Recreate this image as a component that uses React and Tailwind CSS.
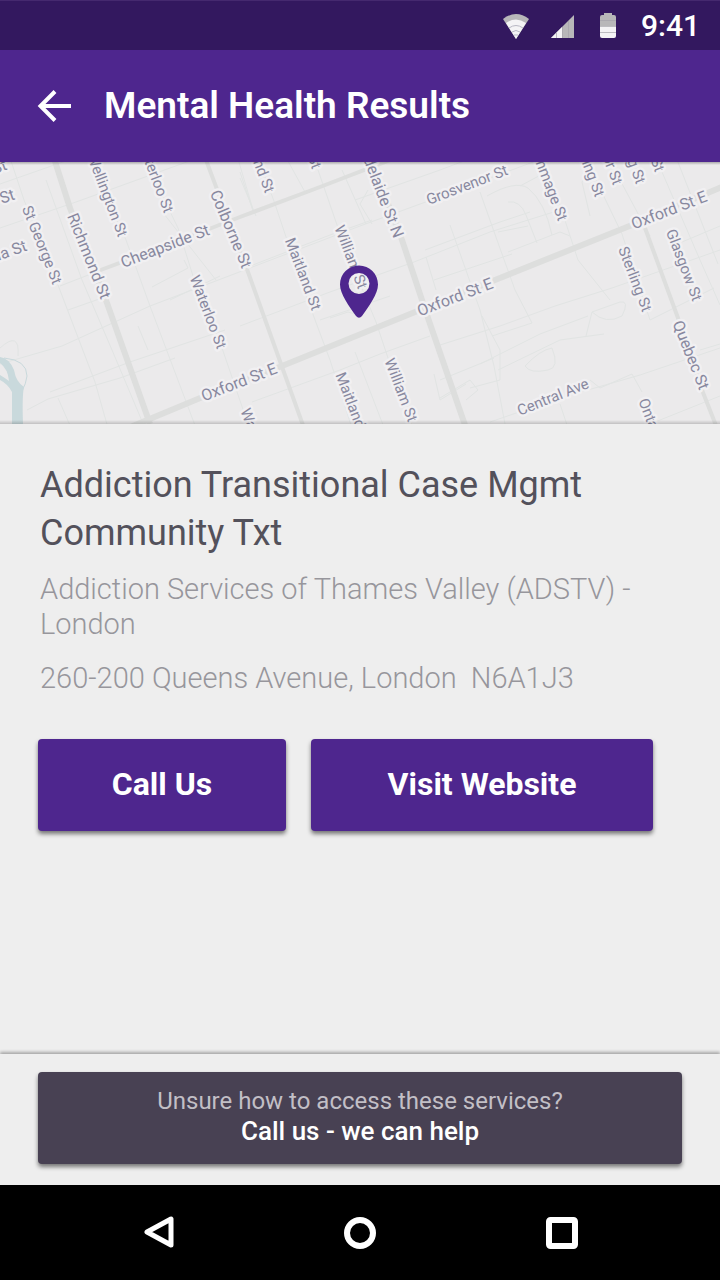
const mainRoads = [
  { d: "M52 152L70 208L107 303L150 424", w: 6 },
  { d: "M128 428L205 396L282 366L420 310L490 282L632 225L724 186", w: 6 },
  { d: "M368 152L402 240L428 318L466 428", w: 6 },
  { d: "M98 271L165 246L240 217L320 187L398 157", w: 4 },
  { d: "M203 152L248 272L281 364L304 428", w: 4 },
  { d: "M645 228L678 318L702 390L717 428", w: 4 },
];

const minorRoads = [
  "M8 152L24 200L58 285L95 382L108 428",
  "M46 180L82 280L112 350L150 440",
  "M85 152L126 240L150 306L196 428",
  "M145 160L178 228L193 276L222 348L248 424",
  "M164 214L216 280",
  "M236 152L254 213M240 178L256 216",
  "M256 152L275 204L302 285L330 360L352 428",
  "M283 152L305 192M240 172L254 214",
  "M318 170L345 248L376 322L388 358L413 428",
  "M342 170L366 224M355 352L385 430",
  "M0 184L40 170L80 156M0 228L76 202L170 168L215 152",
  "M60 286L96 272M68 310L102 298M0 364L62 346L150 306L242 271L360 226L442 196L560 152",
  "M240 326L330 292L414 262L490 232L560 210",
  "M50 392L130 362L225 330M27 410L48 399L120 378L175 358",
  "M58 398L72 430M240 270L330 235L372 220",
  "M152 287L188 268L184 260M138 326L148 350M220 276L170 300",
  "M355 200L440 170L472 158M368 190L360 204L372 224",
  "M252 402L340 370L380 354L430 336",
  "M320 320L390 296M330 318L348 312L362 316",
  "M425 250L500 222L530 212M426 257L436 290M434 280L512 254",
  "M440 345L500 326L555 306L612 288L720 250",
  "M480 192L497 240L515 290L532 323L492 336",
  "M450 225L480 310L494 366L505 424",
  "M487 196Q515 180 528 188Q545 202 552 235M508 202Q520 200 526 215L537 243",
  "M498 232L528 226M508 252L560 232L570 236M520 186L550 170",
  "M555 190L578 260L610 300M595 178L622 234L650 320L714 288",
  "M620 180L650 236M662 172L700 260L720 305M674 152L718 264",
  "M682 242L720 226M590 170L582 182L590 216",
  "M480 364L540 334L588 316M498 370L560 340L604 334",
  "M482 316L500 350L500 380L470 388M440 380L494 358",
  "M525 366Q540 350 552 348Q560 368 548 370Q530 374 525 366",
  "M592 312Q606 325 622 316Q630 300 620 302L592 312M592 312L586 336",
  "M590 380L600 388L632 374L642 392M490 422L560 398L640 375L720 348",
  "M434 374L440 400L466 384M560 404L568 428",
  "M440 398L470 380L478 390L466 400M0 348Q20 330 18 356",
  "M700 350L720 344M650 424L720 396M0 160L20 152",
];

const labels = [
  { t: "St", x: 6, y: 164, r: -20, a: "end" },
  { t: "St", x: 14, y: 194, r: -18, a: "end" },
  { t: "Victoria St", x: 26, y: 245, r: -20, a: "end" },
  { t: "St George St", x: 42, y: 245, r: 68, a: "middle", s: 15 },
  { t: "Richmond St", x: 89, y: 256, r: 68, a: "middle" },
  { t: "Wellington St", x: 123, y: 236, r: 69, a: "end", s: 15 },
  { t: "Waterloo St", x: 169, y: 212, r: 69, a: "end", s: 15 },
  { t: "Cheapside St", x: 165, y: 246, r: -21, a: "middle" },
  { t: "Waterloo St", x: 208, y: 312, r: 69, a: "middle", s: 15 },
  { t: "Colborne St", x: 231, y: 229, r: 67, a: "middle" },
  { t: "Oxford St E", x: 239, y: 382, r: -21, a: "middle" },
  { t: "Waterloo St", x: 245, y: 409, r: 69, a: "start", s: 15 },
  { t: "Maitland St", x: 270, y: 192, r: 69, a: "end", s: 15 },
  { t: "William St", x: 317, y: 168, r: 69, a: "end", s: 15 },
  { t: "Adelaide St N", x: 399, y: 237, r: 69, a: "end" },
  { t: "Grosvenor St", x: 467, y: 185, r: -21, a: "middle", s: 15 },
  { t: "Maitland St", x: 303, y: 274, r: 69, a: "middle", s: 15 },
  { t: "William St", x: 351, y: 257, r: 69, a: "middle", s: 15 },
  { t: "Oxford St E", x: 455, y: 297, r: -21, a: "middle" },
  { t: "William St", x: 401, y: 390, r: 69, a: "middle", s: 15 },
  { t: "Maitland St", x: 340, y: 373, r: 69, a: "start", s: 15 },
  { t: "Gammage St", x: 563, y: 220, r: 69, a: "end", s: 15 },
  { t: "Sterling St", x: 600, y: 196, r: 69, a: "end", s: 15 },
  { t: "Taylor St", x: 618, y: 184, r: 69, a: "end", s: 15 },
  { t: "Young St", x: 641, y: 183, r: 69, a: "end", s: 15 },
  { t: "Elliott St", x: 660, y: 171, r: 69, a: "end", s: 15 },
  { t: "Oxford St E", x: 669, y: 210, r: -21, a: "middle" },
  { t: "Glasgow St", x: 684, y: 265, r: 69, a: "middle", s: 15 },
  { t: "Sterling St", x: 635, y: 279, r: 69, a: "middle", s: 15 },
  { t: "Quebec St", x: 691, y: 355, r: 68, a: "middle" },
  { t: "Central Ave", x: 553, y: 397, r: -22, a: "middle", s: 15 },
  { t: "Ontario St", x: 643, y: 399, r: 69, a: "start", s: 15 },
];

function StreetMap() {
  return (
    <svg
      className="block w-full"
      viewBox="0 162 720 262"
      role="img"
      aria-label="Map of the service location"
    >
      <defs>
        <linearGradient id="edge" x1="0" y1="0" x2="0" y2="1">
          <stop offset="0" stopColor="#000" stopOpacity="0" />
          <stop offset="1" stopColor="#000" stopOpacity="0.18" />
        </linearGradient>
        <linearGradient id="topEdge" x1="0" y1="0" x2="0" y2="1">
          <stop offset="0" stopColor="#000" stopOpacity="0.28" />
          <stop offset="1" stopColor="#000" stopOpacity="0" />
        </linearGradient>
      </defs>
      <rect x="0" y="162" width="720" height="262" fill="#ebeaeb" />
      <g fill="none" stroke="#e1e4e3" strokeWidth="1">
        {minorRoads.map((d) => (
          <path key={d} d={d} />
        ))}
      </g>
      <path
        d="M0 357Q9 358 14 370Q16 382 24 387Q22 395 23 424H12V392Q8 384 0 380V375Q5 378 9 381Q8 369 0 363Z"
        fill="#c9d9dc"
      />
      <path d="M4 358Q27 360 27 376Q26 384 22 391" fill="none" stroke="#c9d9dc" strokeWidth="1" />
      <g fill="none" stroke="#dddedd" strokeLinejoin="round">
        {mainRoads.map((road) => (
          <path key={road.d} d={road.d} strokeWidth={road.w} />
        ))}
      </g>
      <g
        fill="#88889f"
        stroke="#f1f0f2"
        strokeWidth="5"
        strokeLinejoin="round"
        paintOrder="stroke"
        fontFamily="Roboto, sans-serif"
        fontWeight="450"
        dominantBaseline="central"
      >
        {labels.map((l) => (
          <text
            key={`${l.t}-${l.x}`}
            transform={`translate(${l.x} ${l.y}) rotate(${l.r})`}
            textAnchor={l.a}
            fontSize={l.s || 16}
          >
            {l.t}
          </text>
        ))}
      </g>
      <path
        fill="#4e268e"
        fillRule="evenodd"
        d="M359 265.500C348.500 265.500 340 274 340 284.500C340 294 349 306 356 316Q359 319.500 362 316C369 306 378 294 378 284.500C378 274 369.500 265.500 359 265.500ZM359 273A10.500 10.500 0 1 1 359 294A10.500 10.500 0 1 1 359 273Z"
      />
      <rect x="0" y="162" width="720" height="3" fill="url(#topEdge)" />
      <rect x="0" y="420" width="720" height="4" fill="url(#edge)" />
    </svg>
  );
}

function StatusBar() {
  return (
    <div className="flex h-[50px] items-center justify-end border-t border-[#45296f] bg-[#33185f] pr-5 text-white">
      <svg className="mr-5 h-[26px] w-[28px]" viewBox="0 0 28 26" aria-hidden="true">
        <path d="M1 6Q14-4 27 6L14 26Z" fill="#b8b7b9" />
        <path d="M4 10Q14 3 24 10L14 26Z" fill="#f4f3f5" />
        <path d="M7 15Q14 10 21 15M10 19Q14 16 18 19M12 22H16" fill="none" stroke="#b8b7c3" />
      </svg>
      <svg className="mr-6 h-[24px] w-[25px]" viewBox="0 0 25 24" aria-hidden="true">
        <path d="M1 24L24 1V24Z" fill="#b8b7b9" />
        <path d="M1 24L12 13V24Z" fill="#f4f3f5" />
        <path d="M6.500 19V24M12.500 13V24M18.500 7V24" stroke="#a5a3aa" strokeWidth="0.7" />
      </svg>
      <svg className="mr-6 h-[26px] w-[18px]" viewBox="0 0 18 26" aria-hidden="true">
        <path d="M5 0H13V2H15Q17 2 17 4V13H1V4Q1 2 3 2H5Z" fill="#b8b7b9" />
        <path d="M1 13H17V23Q17 25 15 25H3Q1 25 1 23Z" fill="#f4f3f5" />
        <path d="M1 7.500H17M1 13.500H17M1 19.500H17" stroke="#a5a3aa" strokeWidth="0.7" />
      </svg>
      <span className="text-[30px] leading-none font-medium">9:41</span>
    </div>
  );
}

export default function App() {
  return (
    <div className="flex min-h-screen flex-col bg-[#eeeeee] font-['Roboto',sans-serif]">
      <StatusBar />
      <header className="flex h-28 items-center gap-8 bg-[#4e268e] px-9 text-white">
        <button type="button" aria-label="Back" className="flex">
          <svg className="h-9 w-9" viewBox="0 0 36 36" fill="none" aria-hidden="true">
            <path d="M35 18H5M19 3.500L4.500 18L19 32.500" stroke="currentColor" strokeWidth="4" />
          </svg>
        </button>
        <h1 className="text-[37px] font-semibold">Mental Health Results</h1>
      </header>
      <StreetMap />

      <main className="flex-1 px-10 pt-[37px]">
        <h2 className="text-4xl leading-[48px] font-[450] text-[#53515b]">
          Addiction Transitional Case Mgmt Community Txt
        </h2>
        <p className="mt-[15px] text-[29px] leading-[35px] font-light text-[#97969c]">
          Addiction Services of Thames Valley (ADSTV) - London
        </p>
        <p className="mt-[19px] text-[29px] leading-[35px] font-light whitespace-pre-wrap text-[#97969c]">
          {"260-200 Queens Avenue, London  N6A1J3"}
        </p>
        <div className="-mx-0.5 mt-[43px] flex flex-wrap gap-[25px]">
          <button
            type="button"
            className="h-[92px] w-62 rounded bg-[#4e268e] pb-0.5 text-[32px] font-bold text-white shadow-[0_3px_4px_rgba(0,0,0,0.5)]"
          >
            Call Us
          </button>
          <a
            href="#website"
            className="flex h-[92px] w-[342px] items-center justify-center rounded bg-[#4e268e] pb-0.5 text-[32px] font-bold text-white shadow-[0_3px_4px_rgba(0,0,0,0.5)]"
          >
            Visit Website
          </a>
        </div>
      </main>

      <footer className="bg-[#eeeeee] px-[38px] pt-[18px] pb-[21px] shadow-[0_-2px_3px_rgba(0,0,0,0.3)]">
        <button
          type="button"
          className="flex h-[92px] w-full flex-col items-center justify-center rounded bg-[#484153] pb-1 leading-[30px] shadow-[0_3px_4px_rgba(0,0,0,0.5)]"
        >
          <span className="text-2xl leading-[30px] text-[#c2bfc6]">
            Unsure how to access these services?
          </span>
          <span className="text-[26px] leading-[30px] font-medium text-white">
            Call us - we can help
          </span>
        </button>
      </footer>

      <nav className="flex h-[95px] items-center justify-center gap-[166px] bg-black text-white">
        <button type="button" aria-label="Back">
          <svg className="h-9 w-9" viewBox="0 0 36 36" fill="none" aria-hidden="true">
            <path d="M31 4V30L7 17Z" stroke="currentColor" strokeWidth="5" strokeLinejoin="round" />
          </svg>
        </button>
        <button type="button" aria-label="Home">
          <svg className="h-9 w-9" viewBox="0 0 36 36" fill="none" aria-hidden="true">
            <circle cx="18" cy="18" r="13" stroke="currentColor" strokeWidth="6" />
          </svg>
        </button>
        <button type="button" aria-label="Recent apps">
          <svg className="h-9 w-9" viewBox="0 0 36 36" fill="none" aria-hidden="true">
            <rect x="5" y="5" width="26" height="26" rx="1.500" stroke="currentColor" strokeWidth="6" strokeLinejoin="round" />
          </svg>
        </button>
      </nav>
    </div>
  );
}
